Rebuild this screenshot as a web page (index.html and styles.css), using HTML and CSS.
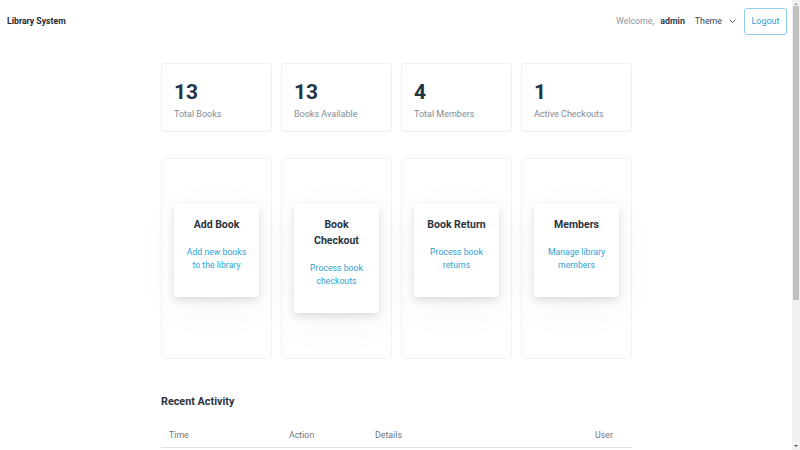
FILE: index.html
```html
<!DOCTYPE html>
<html>
<head>
<meta charset="utf-8">
<title>Library System</title>
<link rel="stylesheet" href="styles.css">
</head>
<body>
<header class="navbar">
  <div class="brand">Library System</div>
  <div class="nav-right">
    <span class="welcome">Welcome, <strong>admin</strong></span>
    <span class="theme">Theme
      <svg class="chev" width="7" height="5" viewBox="0 0 7 5"><path d="M1 1l2.5 2.5L6 1" fill="none" stroke="#555" stroke-width="1" stroke-linecap="round" stroke-linejoin="round"/></svg>
    </span>
    <button class="logout">Logout</button>
  </div>
</header>
<main class="container">
  <section class="stats">
    <div class="stat"><div class="num">13</div><div class="label">Total Books</div></div>
    <div class="stat"><div class="num">13</div><div class="label">Books Available</div></div>
    <div class="stat"><div class="num">4</div><div class="label">Total Members</div></div>
    <div class="stat"><div class="num">1</div><div class="label">Active Checkouts</div></div>
  </section>
  <section class="actions">
    <div class="action"><div class="card"><h3>Add Book</h3><p>Add new books to the library</p></div></div>
    <div class="action"><div class="card"><h3>Book Checkout</h3><p>Process book checkouts</p></div></div>
    <div class="action"><div class="card"><h3>Book Return</h3><p>Process book returns</p></div></div>
    <div class="action"><div class="card"><h3>Members</h3><p>Manage library members</p></div></div>
  </section>
  <section class="recent">
    <h2>Recent Activity</h2>
    <table class="activity">
      <thead>
        <tr><th class="c-time">Time</th><th class="c-action">Action</th><th class="c-details">Details</th><th class="c-user">User</th></tr>
      </thead>
    </table>
  </section>
</main>
<div class="scrollbar">
  <span class="arrow up"></span>
  <span class="thumb"></span>
  <span class="arrow down"></span>
</div>
</body>
</html>
```
FILE: styles.css
```css
* { box-sizing: border-box; }
html { overflow: hidden; }
html, body { margin: 0; padding: 0; }
body {
  font-family: Roboto, "Noto Sans", sans-serif;
  color: #2c3e50;
  background: #fff;
  padding-right: 7px;
}
.navbar {
  display: flex;
  align-items: center;
  justify-content: space-between;
  height: 42px;
  padding: 0 6px 0 7px;
}
.brand {
  font-size: 8.7px;
  font-weight: 700;
  color: #1f2933;
}
.nav-right {
  display: flex;
  align-items: center;
}
.welcome {
  font-size: 8.8px;
  color: #8a959f;
}
.welcome strong { color: #2c3e50; font-weight: 700; margin-left: 4px; }
.theme {
  font-size: 8.8px;
  color: #3a4652;
  margin-left: 10px;
  display: flex;
  align-items: center;
  gap: 7px;
}
.chev { margin-top: 1px; }
.logout {
  margin-left: 8px;
  height: 27px;
  width: 43px;
  padding: 0;
  font: inherit;
  font-size: 9px;
  color: #2aa1d0;
  background: #fff;
  border: 1px solid #8fd0ea;
  border-radius: 3px;
}
.container {
  width: 471px;
  margin: 0 auto;
  padding: 21px 0 40px;
}
.stats, .actions {
  display: grid;
  grid-template-columns: repeat(4, 1fr);
  gap: 9px;
}
.stat {
  height: 69px;
  border: 1px solid #eef0f2;
  border-radius: 3px;
  padding: 15px 12px;
}
.num {
  font-size: 21px;
  font-weight: 700;
  line-height: 26px;
  color: #243447;
}
.label {
  font-size: 9px;
  color: #7f8c98;
  margin-top: 4px;
}
.actions { margin-top: 26px; }
.action {
  border: 1px solid #f1f2f4;
  border-radius: 3px;
  padding: 45px 12px;
  display: flex;
  align-items: flex-start;
}
.card {
  width: 100%;
  background: #fff;
  border-radius: 3px;
  box-shadow: 0 3px 9px rgba(0,0,0,0.12), 0 10px 45px rgba(0,0,0,0.045);
  text-align: center;
  padding: 13px 10px 25px;
}
.card h3 {
  margin: 0;
  font-size: 10.5px;
  line-height: 16px;
  font-weight: 700;
  color: #2a3441;
}
.card p {
  margin: 13px 0 0;
  font-size: 8.7px;
  line-height: 13px;
  color: #2ea3d3;
}
.recent { margin-top: 36px; }
.recent h2 {
  margin: 0;
  font-size: 10.8px;
  font-weight: 700;
  color: #2a3441;
}
.activity {
  width: 100%;
  border-collapse: collapse;
  margin-top: 15px;
  font-size: 8.8px;
}
.activity th {
  text-align: left;
  font-weight: 400;
  color: #6c7783;
  padding: 7px 8px;
  border-bottom: 1px solid #dee2e6;
}
.c-time { width: 120px; }
.c-action { width: 86px; }
.c-details { width: 220px; }
.c-user { width: 45px; }
.scrollbar {
  position: fixed;
  top: 0;
  right: 0;
  width: 8px;
  height: 100%;
  background: #f1f1f1;
  display: flex;
  flex-direction: column;
  align-items: center;
}
.thumb {
  width: 6px;
  height: 294px;
  margin-top: 1px;
  background: #c1c1c1;
  border-radius: 1px;
}
.arrow {
  width: 0;
  height: 0;
  border-left: 2px solid transparent;
  border-right: 2px solid transparent;
}
.arrow.up { border-bottom: 2px solid #a3a3a3; margin-top: 3px; }
.arrow.down { border-top: 2px solid #505050; margin-top: auto; margin-bottom: 3px; }
```
